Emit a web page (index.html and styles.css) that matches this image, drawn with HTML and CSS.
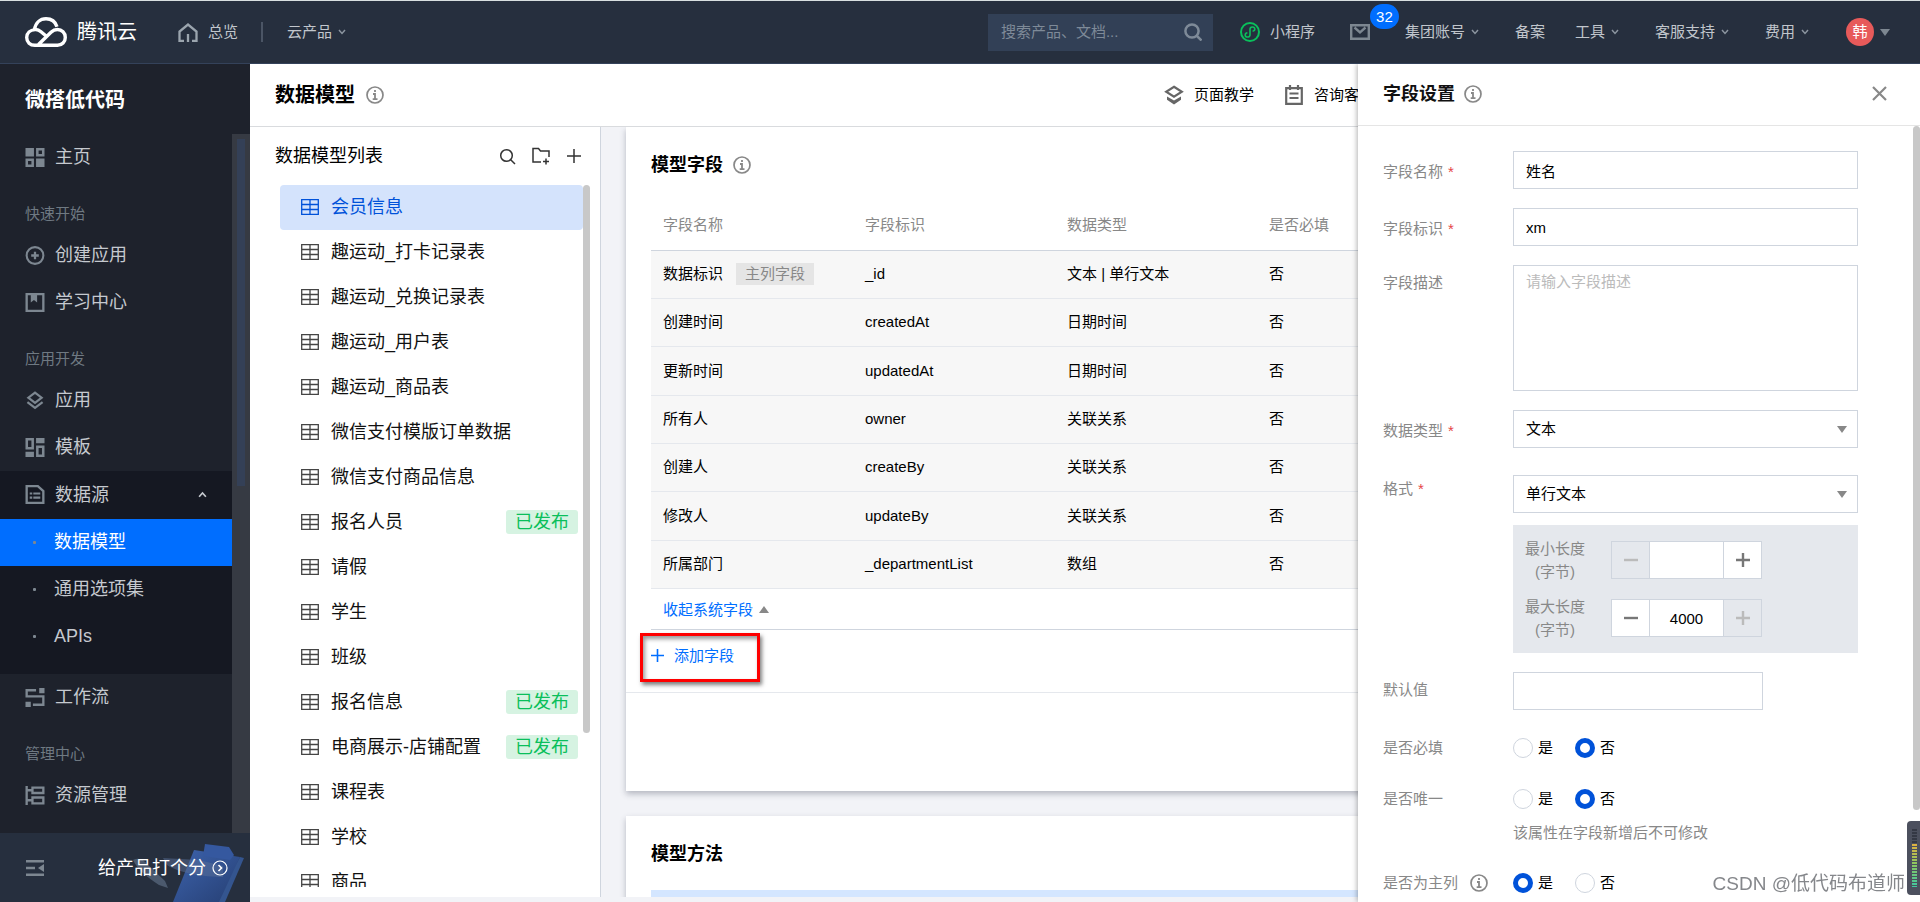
FILE: index.html
```html
<!DOCTYPE html>
<html lang="zh-CN">
<head>
<meta charset="utf-8">
<title>数据模型</title>
<link rel="stylesheet" href="styles.css">
</head>
<body>
<svg class="sprite" aria-hidden="true">
  <symbol id="i-table" viewBox="0 0 18 16"><path d="M.7.7h16.6v14.6H.7zM.7 5.5h16.6M.7 10.5h16.6M9 .7v14.6" fill="none" stroke="currentColor" stroke-width="1.3"/></symbol>
  <symbol id="i-info" viewBox="0 0 18 18"><circle cx="9" cy="9" r="8" fill="none" stroke="currentColor" stroke-width="1.7"/><path d="M9 4v2M7 8h2v5M6.700 13.200h4.800" fill="none" stroke="currentColor" stroke-width="1.8"/></symbol>
  <symbol id="i-down" viewBox="0 0 8 6"><path d="M1 1l3 3.4L7 1" fill="none" stroke="currentColor" stroke-width="1.5"/></symbol>
  <symbol id="i-home" viewBox="0 0 18 18"><path d="M0 0h8v8H0zM10 10h8v8h-8z" fill="currentColor"/><path d="M11.2 1.2h5.6v5.6h-5.6zM1.2 11.2h5.6v5.6H1.2z" fill="none" stroke="currentColor" stroke-width="2.4"/></symbol>
  <symbol id="i-create" viewBox="0 0 20 20"><circle cx="10" cy="10" r="8.8" fill="none" stroke="currentColor" stroke-width="2.2"/><path d="M10 6v8M6 10h8" stroke="currentColor" stroke-width="2.4"/></symbol>
  <symbol id="i-book" viewBox="0 0 18 18"><path d="M1.1 1.1h15.8v15.8H1.1z" fill="none" stroke="currentColor" stroke-width="2.2"/><path d="M5 1h6v8L8 6.6 5 9z" fill="currentColor"/></symbol>
  <symbol id="i-panel" viewBox="0 0 20 19"><path d="M1 1h18v17H1zM1 7h18" fill="none" stroke="currentColor" stroke-width="2"/></symbol>
  <symbol id="i-layers" viewBox="0 0 18 20"><path d="M9 1.6l7 5.4-7 5.4L2 7zM1 11.6l8 6.2 8-6.2" fill="none" stroke="currentColor" stroke-width="2.3"/></symbol>
  <symbol id="i-tpl" viewBox="0 0 18 18"><path d="M10 0h8v5h-8zM0 13h8v5H0z" fill="currentColor"/><path d="M1.2 1.2h5.6v8.6H1.2zM11.2 8.2h5.6v8.6h-5.6z" fill="none" stroke="currentColor" stroke-width="2.4"/></symbol>
  <symbol id="i-data" viewBox="0 0 18 18"><path d="M1.1 1.1h10.6l5.2 4.6v11.2H1.1z" fill="none" stroke="currentColor" stroke-width="2.2"/><path d="M4 8h2.4M7.4 8H14M4 12h2.4M7.4 12H14" stroke="currentColor" stroke-width="2"/></symbol>
  <symbol id="i-flow" viewBox="0 0 18 18"><path d="M10 2.1H1.1V8h15.8v7.9H7" fill="none" stroke="currentColor" stroke-width="2.2"/><path d="M13 0h5v5h-5zM0 13h5v5H0z" fill="currentColor"/></symbol>
  <symbol id="i-res" viewBox="0 0 18 18"><path d="M1.1 0v18M1 4h5M1 13.5h5M6.6 1.6h10.3v5H6.6zM6.6 10.9h10.3v5.5H6.6z" fill="none" stroke="currentColor" stroke-width="2.2"/></symbol>
  <symbol id="i-stack" viewBox="0 0 20 20"><path d="M10 1.700l7.800 5-7.800 5-7.800-5z" fill="none" stroke="currentColor" stroke-width="2.2"/><path d="M3 11.500l7 4 7-4v3.200L10 19.500l-7-4.800z" fill="currentColor"/></symbol>
</svg>

<header class="topnav">
  <a class="brand" href="#">
    <svg width="42" height="30" viewBox="0 0 42 30" fill="none" stroke="#fff" stroke-width="3.4"><path d="M9.5 12.5C10.500 6 15 1.700 21 1.700c5.500 0 9.500 3.300 11 8"/><path d="M20.500 18.500l-4.500-3.800c-2-1.700-4-2.300-6-2.100-4.700.4-8.300 3.600-8.300 8 0 4.500 3.500 7.700 8.100 7.700h22.700c4.500 0 7.800-3.400 7.800-7.900s-3.400-7.900-7.900-7.900c-2.600 0-4.500 1-6.400 2.800L13.500 27.500"/></svg>
    <span>腾讯云</span>
  </a>
  <a class="navlink overview" href="#">
    <svg width="20" height="19" viewBox="0 0 20 19" fill="none" stroke="#9ba5ae" stroke-width="2.300"><path d="M6 17.800H1.500V8.500L10 1.500l8.500 7v9.300H14M10 11v8"/></svg>
    总览
  </a>
  <span class="divider"></span>
  <button class="navlink">云产品 <svg class="chev"><use href="#i-down"/></svg></button>
  <div class="navright">
    <div class="search">
      <input type="text" aria-label="搜索" placeholder="搜索产品、文档...">
      <svg width="18" height="18" viewBox="0 0 18 18" fill="none" stroke="#7e8a98" stroke-width="2.500"><circle cx="8" cy="8" r="6.600"/><path d="M12.500 12.500l5 5"/></svg>
    </div>
    <a class="navlink mini" href="#">
      <svg width="20" height="20" viewBox="0 0 20 20" fill="none" stroke="#0abf5b"><circle cx="10" cy="10" r="9" stroke-width="2"/><path d="M10 12.400V7.300c0-1.300 1.100-2.300 2.400-2.300s2.400.9 2.400 2.100-1 2-2.200 2.200M10 7.600v5.100c0 1.300-1.100 2.300-2.400 2.300s-2.400-.9-2.400-2.100 1-2 2.200-2.200" stroke-width="1.600"/></svg>
      小程序
    </a>
    <a class="mail" href="#" aria-label="消息">
      <svg width="20" height="16" viewBox="0 0 20 16" fill="none" stroke="#7d8791" stroke-width="2.400"><path d="M1.200 1.200h17.600v13.600H1.200zM4.500 3.500l5.500 4.800 5.500-4.800"/></svg>
      <span class="badge">32</span>
    </a>
    <nav class="menus">
      <button class="navlink drop">集团账号 <svg class="chev"><use href="#i-down"/></svg></button>
      <a class="navlink" href="#">备案</a>
      <button class="navlink drop">工具 <svg class="chev"><use href="#i-down"/></svg></button>
      <button class="navlink drop">客服支持 <svg class="chev"><use href="#i-down"/></svg></button>
      <button class="navlink drop">费用 <svg class="chev"><use href="#i-down"/></svg></button>
    </nav>
    <button class="account"><span class="avatar">韩</span><span class="tri"></span></button>
  </div>
</header>

<div class="shell">
  <aside class="sidebar">
    <h2 class="side-title">微搭低代码</h2>
    <div class="side-scroll">
      <nav class="side-nav">
        <a class="side-item" href="#"><svg><use href="#i-home"/></svg>主页</a>
        <div class="side-sec">快速开始</div>
        <a class="side-item" href="#"><svg><use href="#i-create"/></svg>创建应用</a>
        <a class="side-item" href="#"><svg><use href="#i-book"/></svg>学习中心</a>
        <div class="side-sec">应用开发</div>
        <a class="side-item" href="#"><svg><use href="#i-layers"/></svg>应用</a>
        <a class="side-item" href="#"><svg><use href="#i-tpl"/></svg>模板</a>
        <div class="side-group">
          <button class="side-item"><svg><use href="#i-data"/></svg>数据源<svg class="up" viewBox="0 0 8 6"><path d="M1 5l3-3.400L7 5" fill="none" stroke="#c5c9cf" stroke-width="1.500"/></svg></button>
          <a class="side-item sub active" href="#"><i class="dot"></i>数据模型</a>
          <a class="side-item sub" href="#"><i class="dot"></i>通用选项集</a>
          <a class="side-item sub" href="#"><i class="dot"></i>APIs</a>
        </div>
        <a class="side-item" href="#"><svg><use href="#i-flow"/></svg>工作流</a>
        <div class="side-sec">管理中心</div>
        <a class="side-item" href="#"><svg><use href="#i-res"/></svg>资源管理</a>
        <a class="side-item" href="#" aria-label="更多"><svg><use href="#i-panel"/></svg></a>
      </nav>
      <div class="side-track"><div class="side-thumb"></div></div>
    </div>
    <div class="side-foot">
      <svg class="clip" width="250" height="69" viewBox="0 0 250 69" aria-hidden="true">
        <defs><linearGradient id="g" x1="0" y1="0" x2="1" y2="1"><stop offset="0" stop-color="#3d63ad"/><stop offset="1" stop-color="#263f73"/></linearGradient></defs>
        <path d="M240 24l4 1-19 44h-10z" fill="#34558f"/>
        <path d="M194 17l46 7-21 45h-46z" fill="url(#g)"/>
        <path d="M205 11l24 3 5 8-4 5-27-4z" fill="#35589f"/>
        <path d="M163 25l36 2 24 6v11c-20 0-44-4-56-12z" fill="#5a6f97" opacity=".5"/>
        <path d="M133 27c6-3 11 0 14 4l18 17 3 7-9-3c-12-8-22-16-26-25z" fill="#58687e" opacity=".75"/>
      </svg>
      <button class="collapse" aria-label="收起"><svg width="18" height="16" viewBox="0 0 18 16"><path d="M0 1.200h18M0 8h9M0 14.800h18" stroke="#7d8791" stroke-width="2.400"/><path d="M18 4v8l-6-4z" fill="#7d8791"/></svg></button>
      <a class="rate" href="#">给产品打个分<svg width="16" height="16" viewBox="0 0 16 16" fill="none" stroke="#fff" stroke-width="1.200"><circle cx="8" cy="8" r="7"/><path d="M6.500 5L9.500 8l-3 3" stroke-width="1.600"/></svg></a>
    </div>
  </aside>

  <div class="content">
    <div class="pagebar">
      <h1>数据模型</h1>
      <svg class="info"><use href="#i-info"/></svg>
      <a class="help first" href="#"><svg><use href="#i-stack"/></svg>页面教学</a>
      <a class="help" href="#"><svg viewBox="0 0 20 20"><path d="M2.200 3.200h15.600v15.600H2.200zM6 0v5M14 0v5M5.500 8.500h9M5.500 13h9" fill="none" stroke="currentColor" stroke-width="2.200"/></svg>咨询客服</a>
    </div>
    <div class="workspace">
      <section class="models">
        <div class="models-head">
          <h3>数据模型列表</h3>
          <button aria-label="搜索"><svg width="17" height="17" viewBox="0 0 17 17"><circle cx="7.500" cy="7.500" r="5.800"/><path d="M11.700 11.700l4.300 4.300"/></svg></button>
          <button aria-label="新建文件夹"><svg width="18" height="18" viewBox="0 0 18 18"><path d="M9 15H1V1.500h5.500l2 2.500H17v6M14 11.500v6M11 14.500h6"/></svg></button>
          <button aria-label="新增"><svg width="16" height="16" viewBox="0 0 16 16"><path d="M8 1v14M1 8h14"/></svg></button>
        </div>
        <div class="models-scroll">
          <ul class="model-list">
            <li class="on"><svg><use href="#i-table"/></svg>会员信息</li>
            <li><svg><use href="#i-table"/></svg>趣运动_打卡记录表</li>
            <li><svg><use href="#i-table"/></svg>趣运动_兑换记录表</li>
            <li><svg><use href="#i-table"/></svg>趣运动_用户表</li>
            <li><svg><use href="#i-table"/></svg>趣运动_商品表</li>
            <li><svg><use href="#i-table"/></svg>微信支付模版订单数据</li>
            <li><svg><use href="#i-table"/></svg>微信支付商品信息</li>
            <li><svg><use href="#i-table"/></svg>报名人员<span class="tag">已发布</span></li>
            <li><svg><use href="#i-table"/></svg>请假</li>
            <li><svg><use href="#i-table"/></svg>学生</li>
            <li><svg><use href="#i-table"/></svg>班级</li>
            <li><svg><use href="#i-table"/></svg>报名信息<span class="tag">已发布</span></li>
            <li><svg><use href="#i-table"/></svg>电商展示-店铺配置<span class="tag">已发布</span></li>
            <li><svg><use href="#i-table"/></svg>课程表</li>
            <li><svg><use href="#i-table"/></svg>学校</li>
            <li><svg><use href="#i-table"/></svg>商品</li>
          </ul>
          <div class="thumb"></div>
        </div>
      </section>

      <main class="detail">
        <section class="card">
          <div class="card-main">
            <h3>模型字段 <svg class="info"><use href="#i-info"/></svg></h3>
            <table class="fields">
              <thead><tr><th>字段名称</th><th>字段标识</th><th>数据类型</th><th>是否必填</th><th class="rest"></th></tr></thead>
              <tbody>
                <tr><td>数据标识<span class="key">主列字段</span></td><td>_id</td><td>文本 | 单行文本</td><td>否</td><td></td></tr>
                <tr><td>创建时间</td><td>createdAt</td><td>日期时间</td><td>否</td><td></td></tr>
                <tr><td>更新时间</td><td>updatedAt</td><td>日期时间</td><td>否</td><td></td></tr>
                <tr><td>所有人</td><td>owner</td><td>关联关系</td><td>否</td><td></td></tr>
                <tr><td>创建人</td><td>createBy</td><td>关联关系</td><td>否</td><td></td></tr>
                <tr><td>修改人</td><td>updateBy</td><td>关联关系</td><td>否</td><td></td></tr>
                <tr><td>所属部门</td><td>_departmentList</td><td>数组</td><td>否</td><td></td></tr>
              </tbody>
            </table>
            <div class="fold"><button>收起系统字段<span class="tri-up"></span></button></div>
            <div class="add"><button><svg width="13" height="13" viewBox="0 0 13 13"><path d="M6.500 0v13M0 6.500h13" stroke="#006eff" stroke-width="1.600"/></svg>添加字段</button><span class="mark"></span></div>
          </div>
          <div class="card-foot"></div>
        </section>
        <section class="card methods">
          <h3>模型方法</h3>
          <div class="notice"></div>
        </section>
      </main>
    </div>

    <aside class="drawer">
      <div class="drawer-head">
        <h3>字段设置</h3>
        <svg class="info"><use href="#i-info"/></svg>
        <button class="close" aria-label="关闭"><svg width="15" height="15" viewBox="0 0 15 15"><path d="M1 1l13 13M14 1L1 14" stroke="#888" stroke-width="2.200"/></svg></button>
      </div>
      <form class="form">
        <div class="row"><label for="f1">字段名称<em>*</em></label><input id="f1" type="text" value="姓名"></div>
        <div class="row"><label for="f2">字段标识<em>*</em></label><input id="f2" type="text" value="xm"></div>
        <div class="row"><label for="f3" class="high">字段描述</label><textarea id="f3" placeholder="请输入字段描述"></textarea></div>
        <div class="row"><label for="f4">数据类型<em>*</em></label><span class="select"><select id="f4"><option>文本</option></select></span></div>
        <div class="row fmt"><label for="f5">格式<em>*</em></label>
          <div class="stack">
            <span class="select"><select id="f5"><option>单行文本</option></select></span>
            <div class="limits">
              <div class="limit"><label for="f6">最小长度<br>(字节)</label>
                <div class="stepper"><button type="button" disabled aria-label="减少">
                  <svg viewBox="0 0 14 14"><path d="M0 7h14"/></svg></button><input id="f6" type="text"><button type="button" aria-label="增加"><svg viewBox="0 0 14 14"><path d="M0 7h14M7 0v14"/></svg></button></div></div>
              <div class="limit"><label for="f7">最大长度<br>(字节)</label>
                <div class="stepper"><button type="button" aria-label="减少">
                  <svg viewBox="0 0 14 14"><path d="M0 7h14"/></svg></button><input id="f7" type="text" value="4000"><button type="button" disabled aria-label="增加"><svg viewBox="0 0 14 14"><path d="M0 7h14M7 0v14"/></svg></button></div></div>
            </div>
          </div>
        </div>
        <div class="row"><label for="f8" class="high">默认值</label><input id="f8" class="short" type="text"></div>
        <div class="row radios first"><span class="lbl">是否必填</span><label><input type="radio" name="req">是</label><label><input type="radio" name="req" checked>否</label></div>
        <div class="row radios"><span class="lbl">是否唯一</span><label><input type="radio" name="uni">是</label><label><input type="radio" name="uni" checked>否</label></div>
        <p class="note">该属性在字段新增后不可修改</p>
        <div class="row radios last"><span class="lbl">是否为主列<svg class="info"><use href="#i-info"/></svg></span><label><input type="radio" name="main" checked>是</label><label><input type="radio" name="main">否</label></div>
      </form>
      <div class="drawer-thumb"></div>
    </aside>
  </div>
</div>
<div class="watermark">CSDN @低代码布道师</div>
<div class="meter"><span></span></div>
</body>
</html>
```
FILE: styles.css
```css
* { box-sizing: border-box; }
body {
  margin: 0; height: 100vh; overflow: hidden; display: flex; flex-direction: column;
  font: 15px/20px "Liberation Sans", "Noto Sans CJK SC", sans-serif; color: #000; background: #f2f3f7;
}
h1, h2, h3, ul, p { margin: 0; padding: 0; }
a { color: inherit; text-decoration: none; }
button, input, select, textarea { font: inherit; color: inherit; }
button { border: 0; background: none; padding: 0; }
.sprite { position: absolute; width: 0; height: 0; }
svg { flex: none; }
.info { width: 18px; height: 18px; color: #888; }

/* top navigation */
.topnav {
  flex: none; height: 64px; display: flex; align-items: center; padding: 0 30px 0 25px;
  background: #262f3e; border-top: 1px solid #d8dfe0; border-bottom: 1px solid #34425a; color: #c1c6cc;
}
.brand { display: flex; align-items: center; gap: 10px; color: #fff; font-size: 20px; }
.navlink { display: flex; align-items: center; gap: 6px; white-space: nowrap; }
.overview { margin-left: 41px; gap: 10px; }
.divider { width: 2px; height: 20px; background: #4b5565; margin: 0 24px 0 23px; }
.chev { width: 8px; height: 6px; color: #8c95a0; }
.navright { margin-left: auto; display: flex; align-items: center; }
.search { display: flex; align-items: center; width: 225px; height: 37px; padding: 0 11px 0 13px; background: #324056; }
.search input { flex: 1; min-width: 0; border: 0; padding: 0; background: none; outline: 0; }
.search input::placeholder { color: #7e8a98; opacity: 1; }
.mini { margin-left: 27px; gap: 10px; }
.mail { position: relative; display: flex; margin-left: 35px; }
.badge {
  position: absolute; left: 20px; top: -20px; width: 29px; height: 25px; border-radius: 13px;
  background: #006eff; color: #fff; text-align: center; line-height: 25px;
}
.menus { display: flex; gap: 30px; margin-left: 35px; }
.drop { padding-right: 6px; }
.account { display: flex; align-items: center; gap: 6px; margin-left: 31px; }
.avatar { width: 28px; height: 28px; border-radius: 50%; background: #e75a5a; color: #fff; line-height: 28px; text-align: center; }
.tri { border: 5px solid transparent; border-top: 7px solid #7d8791; border-bottom: 0; }

.shell { flex: 1; min-height: 0; display: flex; }

/* sidebar */
.sidebar { flex: none; width: 250px; display: flex; flex-direction: column; background: #1e222c; color: #c5c9cf; }
.side-title { height: 70px; padding: 22px 25px 0; font-size: 20px; line-height: 28px; color: #fff; }
.side-scroll { flex: 1; min-height: 0; display: flex; overflow: hidden; }
.side-nav { flex: 1; font-size: 18px; }
.side-item { display: flex; align-items: center; width: 100%; height: 47px; padding: 0 25px 1px; gap: 10px; text-align: left; }
.side-item svg { width: 20px; height: 19px; color: #7d8791; }
.side-item .up { width: 9px; height: 7px; margin-left: auto; }
.side-sec { padding: 24px 25px 9px; font-size: 15px; line-height: 18px; color: #6f7982; }
.side-group { background: #151822; padding-bottom: 14px; }
.side-group button { height: 48px; }
.sub { gap: 18px; padding-left: 33px; }
.dot { width: 3px; height: 3px; border-radius: 1px; background: #7d8791; }
.active { background: #006eff; color: #fff; }
.side-track { width: 18px; padding: 5px 5px 0; background: #363a43; }
.side-thumb { height: 347px; background: #344057; }
.side-foot { position: relative; height: 69px; display: flex; align-items: center; justify-content: space-between; padding: 0 22px 0 26px; background: #262f3e; color: #fff; font-size: 18px; }
.clip { position: absolute; left: 0; top: 0; }
.collapse, .rate { position: relative; display: flex; align-items: center; gap: 6px; }

/* page */
.content { position: relative; flex: 1; min-width: 0; display: flex; flex-direction: column; }
.pagebar { flex: none; height: 63px; display: flex; align-items: center; padding-left: 25px; background: #fff; border-bottom: 1px solid #d9dbde; }
.pagebar h1 { font-size: 20px; line-height: 28px; margin-right: 11px; }
.help { display: flex; align-items: center; gap: 10px; margin-right: 30px; }
.help svg { width: 20px; height: 20px; color: #666; }
.help.first { margin-left: auto; }
.help:last-child { margin-right: 546px; }
.workspace { flex: 1; min-height: 0; display: flex; padding-bottom: 5px; }

.models { flex: none; width: 351px; display: flex; flex-direction: column; padding-bottom: 10px; background: #fff; border-right: 1px solid #cfd5de; }
.models-head { height: 58px; display: flex; align-items: center; gap: 16px; padding: 0 18px 0 25px; }
.models-head h3 { flex: 1; font-size: 18px; font-weight: 400; }
.models-head button { display: flex; }
.models-head svg { fill: none; stroke: #333; stroke-width: 1.500; }
.models-scroll { flex: 1; min-height: 0; display: flex; overflow: hidden; padding: 0 10px 0 30px; }
.model-list { flex: 1; list-style: none; font-size: 18px; }
.model-list li { height: 45px; display: flex; align-items: center; gap: 12px; padding: 0 5px 2px 21px; border-radius: 4px; color: #111; }
.model-list svg { width: 18px; height: 16px; color: #444; }
.model-list .on, .on svg { color: #0052d9; }
.on { background: #d4e3fc; }
.tag { margin-left: auto; padding: 0 9px; line-height: 24px; border-radius: 3px; background: #d6f3e2; color: #0abf5b; }
.thumb { width: 7px; height: 548px; border-radius: 4px; background: #c8c8c8; }

.detail { flex: 1; min-width: 0; overflow: hidden; padding: 0 25px; }
.card { background: #fff; box-shadow: 0 3px 6px rgba(54, 58, 80, .32); }
.card h3 { display: flex; align-items: center; gap: 10px; font-size: 18px; line-height: 24px; }
.card-main { padding: 26px 25px 0; border-bottom: 1px solid #e5e8ed; }
.card-foot { height: 98px; }
.fields { width: 100%; margin-top: 23px; border-collapse: collapse; table-layout: fixed; }
.fields th { width: 202px; height: 50px; padding: 0 12px; text-align: left; font-weight: 400; color: #888; border-bottom: 1px solid #cfd5de; }
.fields .rest { width: auto; }
.fields td { height: 48px; padding: 0 12px; background: #f7f7f7; border-bottom: 1px solid #e5e8ed; }
.fields tr:nth-child(3n) td { height: 49px; }
.key { display: inline-block; margin-left: 13px; padding: 1px 9px; background: #e5e5e5; color: #888; }
.fold { height: 41px; padding: 11px 12px 0; border-bottom: 1px solid #cfd5de; }
.fold button { display: flex; align-items: center; gap: 6px; color: #006eff; }
.tri-up { border: 5px solid transparent; border-bottom: 7px solid #888; border-top: 0; }
.add { position: relative; height: 62px; padding-top: 16px; }
.add button { display: flex; align-items: center; gap: 10px; color: #006eff; }
.mark { position: absolute; left: -11px; top: 3px; width: 120px; height: 49px; border: 3px solid #f00; box-shadow: 2px 3px 4px rgba(0, 0, 0, .5), inset 2px 3px 4px rgba(0, 0, 0, .4); }
.methods { margin-top: 25px; padding: 26px 25px 0; }
.notice { height: 60px; margin-top: 24px; background: #d4e6ff; }

/* settings drawer */
.drawer { position: absolute; top: 0; right: 0; bottom: 0; width: 562px; background: #fff; box-shadow: -1px 0 5px rgba(0, 0, 0, .3); clip-path: inset(0 0 0 -10px); }
.drawer-head { display: flex; align-items: center; height: 62px; padding: 0 33px 2px 25px; border-bottom: 1px solid #e5e5e5; }
.drawer-head h3 { font-size: 18px; margin-right: 9px; color: #111; }
.close { display: flex; margin-left: auto; }
.form { padding: 25px 62px 0 25px; }
.row { display: flex; align-items: flex-start; margin-bottom: 19px; }
.row > label:first-child, .lbl { flex: none; width: 130px; padding-top: 11px; color: #888; }
.row > label.high { padding-top: 8px; }
.row em { margin-left: 5px; color: #e54545; font-style: normal; }
.form input[type="text"], textarea, select {
  width: 100%; height: 38px; padding: 0 12px; border: 1px solid #cfd5de; border-radius: 0; background: #fff; outline: 0;
}
.row > input, textarea, .select, .stack { flex: 1; min-width: 0; }
textarea { display: block; padding: 6px 12px; resize: none; }
.row > textarea { height: 126px; }
textarea::placeholder { color: #bbb; opacity: 1; }
.select { position: relative; display: block; }
select { display: block; appearance: none; }
.select::after { content: ""; position: absolute; right: 11px; top: 16px; border: 5px solid transparent; border-top: 7px solid #888; border-bottom: 0; }
.fmt { margin-top: 27px; }
.row.fmt > label:first-child { padding-top: 4px; }
.limits { display: flex; flex-direction: column; gap: 12px; margin-top: 12px; padding: 12px; background: #e5e8ed; }
.limit { display: flex; gap: 26px; }
.limit label { width: 60px; line-height: 23px; text-align: center; color: #888; white-space: nowrap; }
.stepper { display: flex; height: 38px; margin-top: 4px; border: 1px solid #cfd5de; }
.stepper button { width: 37px; display: flex; align-items: center; justify-content: center; background: #fff; }
.stepper button:disabled { background: #e5e8ed; }
.stepper svg { width: 14px; height: 14px; stroke: #777; stroke-width: 2.400; }
.stepper button:disabled svg { stroke: #bbb; }
.form .stepper input { width: 75px; height: 36px; padding: 0; border-width: 0 1px; text-align: center; }
.form .row > .short { flex: none; width: 250px; }
.radios { align-items: center; height: 20px; margin-bottom: 31px; }
.radios.first { margin-top: 28px; }
.radios label { display: flex; align-items: center; width: 62px; gap: 5px; }
.radios .lbl { display: flex; align-items: center; gap: 12px; padding: 0; }
.radios input { appearance: none; width: 20px; height: 20px; margin: 0; border: 1px solid #cfd5de; border-radius: 50%; }
.radios input:checked { border: 5px solid #0052d9; }
.note { margin: -17px 0 30px 130px; color: #888; }
.row.last { margin-bottom: 0; }
.drawer-thumb { position: absolute; right: 0; top: 62px; width: 7px; height: 684px; border-radius: 4px; background: #c8c8c8; }

.watermark { position: fixed; right: 15px; bottom: 5px; font-size: 19px; line-height: 26px; color: #85878b; }
.meter { position: fixed; right: 0; bottom: 7px; width: 13px; height: 74px; padding: 8px 3px 8px 5px; border-radius: 4px 0 0 4px; background: #4c505e; }
.meter span { display: block; height: 100%; background: repeating-linear-gradient(transparent 0 2px, #4c505e 2px 3px), linear-gradient(#343844 25%, #e0b040 26%, #8cc860 60%, #40c8a0); }
```
